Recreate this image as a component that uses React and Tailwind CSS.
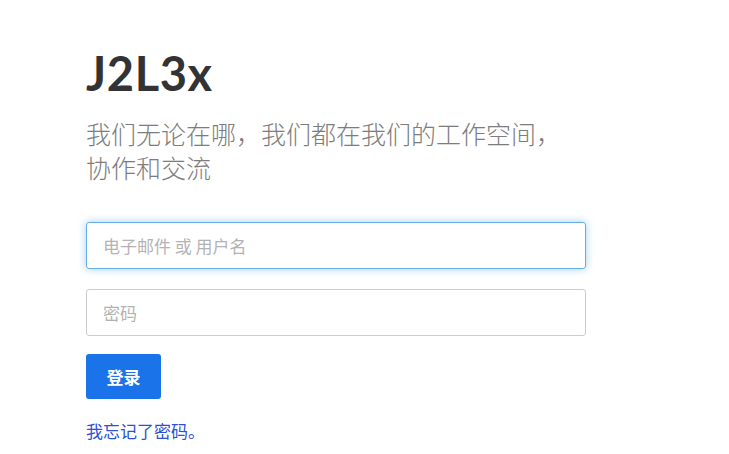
import React from "react";

export default function App() {
  return (
    <div className="min-h-[454px] w-full bg-white">
      <div className="flex flex-col pl-[86px] pt-[48px] font-['Lato','Noto_Sans_CJK_SC',sans-serif]">
        <h1 className="text-[47px] font-bold leading-[50px] text-[#333333] tracking-[0.6px]">J2L3x</h1>
        <p className="mt-[18px] w-[520px] text-[25px] leading-[34px] text-[#7d7d7d] font-['Noto_Sans_CJK_SC',sans-serif] font-light">
          我们无论在哪，我们都在我们的工作空间，
          <br />
          协作和交流
        </p>
        <div className="mt-[38px] flex flex-col gap-[20px] w-[500px]">
          <input
            type="text"
            placeholder="电子邮件 或 用户名"
            className="h-[47px] w-full rounded-[3px] border border-[#66afe9] px-[16px] text-[17px] text-[#333] placeholder:text-[#b3b3b3] outline-none shadow-[0_0_8px_rgba(102,175,233,0.6)] font-['Noto_Sans_CJK_SC',sans-serif]"
          />
          <input
            type="password"
            placeholder="密码"
            className="h-[47px] w-full rounded-[3px] border border-[#cccccc] px-[16px] text-[17px] text-[#333] placeholder:text-[#b3b3b3] outline-none font-['Noto_Sans_CJK_SC',sans-serif]"
          />
        </div>
        <div className="mt-[18px]">
          <button className="h-[45px] w-[75px] rounded-[3px] bg-[#1a73e8] text-[17px] font-bold text-white font-['Noto_Sans_CJK_SC',sans-serif]">
            登录
          </button>
        </div>
        <a className="mt-[20px] text-[17px] leading-[24px] text-[#2b50d8] font-['Noto_Sans_CJK_SC',sans-serif] w-fit">
          我忘记了密码。
        </a>
      </div>
    </div>
  );
}
